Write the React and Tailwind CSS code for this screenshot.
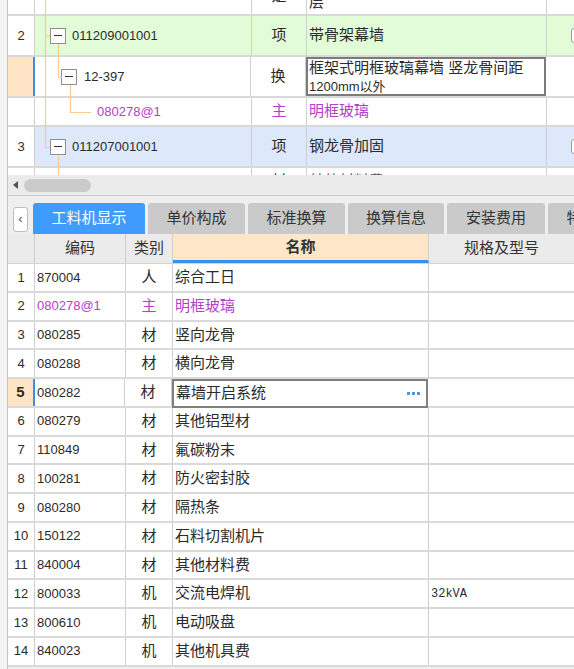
import React from "react";

const font = "font-['Liberation_Sans','Noto_Sans_CJK_SC',sans-serif]";
const purple = "text-[#b241cc]";

function Box() {
  return (
    <div className="w-[16px] h-[16px] border border-[#8f8f8f] bg-white flex items-center justify-center shrink-0">
      <div className="w-[8px] h-[1px] bg-[#333]" />
    </div>
  );
}

function Check() {
  return <div className="ml-[24px] w-[14px] h-[15px] shrink-0 rounded-[3px] border border-[#9a9a9a] bg-white" />;
}

const rows = [
  ["870004", "人", "综合工日"],
  ["080278@1", "主", "明框玻璃", true],
  ["080285", "材", "竖向龙骨"],
  ["080288", "材", "横向龙骨"],
  ["080282", "材", "幕墙开启系统"],
  ["080279", "材", "其他铝型材"],
  ["110849", "材", "氟碳粉末"],
  ["100281", "材", "防火密封胶"],
  ["080280", "材", "隔热条"],
  ["150122", "材", "石料切割机片"],
  ["840004", "材", "其他材料费"],
  ["800033", "机", "交流电焊机", false, "32kVA"],
  ["800610", "机", "电动吸盘"],
  ["840023", "机", "其他机具费"],
];

const tabs = [
  ["工料机显示", "w-[112px]"],
  ["单价构成", "w-[97px]"],
  ["标准换算", "w-[97px]"],
  ["换算信息", "w-[96px]"],
  ["安装费用", "w-[98px]"],
  ["特殊项目", "w-[97px]"],
];

export default function App() {
  return (
    <div className={`w-[574px] h-[669px] overflow-hidden bg-[#efefef] flex ${font} text-[#2b2b2b]`}>
      {/* gutter */}
      <div className="w-[8px] shrink-0 bg-[#f3f3f3] border-r border-[#c6c6c6]" />

      <div className="flex-1 min-w-0 flex flex-col">
        {/* top tree table */}
        <div className="relative h-[175px] bg-white overflow-hidden shrink-0">
          {/* partial row */}
          <div className="flex h-[16px] border-b-2 border-[#d9d9d9] overflow-hidden">
            <div className="w-[27px] border-r border-[#cfcfcf]" />
            <div className="w-[217px] border-r border-[#cfcfcf]" />
            <div className="w-[55px] border-r border-[#cfcfcf] flex justify-center">
              <span className="text-[15px] leading-[15px] mt-[-12px]">是</span>
            </div>
            <div className="w-[240px] border-r border-[#cfcfcf] pl-[2px]">
              <span className="block text-[15px] leading-[15px] mt-[-6px]">层</span>
            </div>
            <div className="flex-1" />
          </div>

          {/* row 2 */}
          <div className="flex h-[41px] border-b-2 border-[#d9d9d9]">
            <div className="w-[27px] border-r border-[#cfcfcf] bg-white flex items-center justify-center text-[13px]">2</div>
            <div className="w-[217px] border-r border-[#cfcfcf] bg-[#e2fcd8] flex items-center pl-[15px] gap-[6px] text-[13px]">
              <Box />
              <span>011209001001</span>
            </div>
            <div className="w-[55px] border-r border-[#cfcfcf] bg-[#e2fcd8] flex items-center justify-center text-[15px]">项</div>
            <div className="w-[240px] border-r border-[#cfcfcf] bg-[#e2fcd8] flex items-center pl-[2px] text-[15px]">带骨架幕墙</div>
            <div className="flex-1 bg-[#e2fcd8] flex items-center overflow-hidden"><Check /></div>
          </div>

          {/* row 12-397 */}
          <div className="flex h-[41px] border-b-2 border-[#d9d9d9]">
            <div className="w-[27px] border-r-2 border-[#3a8ee8] bg-[#ffe5c6]" />
            <div className="w-[216px] border-r border-[#cfcfcf] flex items-center pl-[26px] gap-[7px] text-[13px]">
              <Box />
              <span>12-397</span>
            </div>
            <div className="w-[55px] flex items-center justify-center text-[15px] border-r border-[#cfcfcf]">换</div>
            <div className="w-[240px] border-2 border-[#7b7b7b] flex flex-col justify-center pl-[1px] leading-[19px]">
              <span className="text-[15px] whitespace-nowrap">框架式明框玻璃幕墙 竖龙骨间距</span>
              <span className="text-[13px]">1200mm以外</span>
            </div>
            <div className="flex-1" />
          </div>

          {/* row 080278@1 */}
          <div className="flex h-[29px] border-b-2 border-[#d9d9d9]">
            <div className="w-[27px] border-r border-[#cfcfcf]" />
            <div className={`w-[217px] border-r border-[#cfcfcf] flex items-center pl-[62px] text-[13px] ${purple}`}>080278@1</div>
            <div className={`w-[55px] border-r border-[#cfcfcf] flex items-center justify-center text-[15px] ${purple}`}>主</div>
            <div className={`w-[240px] border-r border-[#cfcfcf] flex items-center pl-[2px] text-[15px] ${purple}`}>明框玻璃</div>
            <div className="flex-1" />
          </div>

          {/* row 3 */}
          <div className="flex h-[41px] border-b-2 border-[#d9d9d9]">
            <div className="w-[27px] border-r border-[#cfcfcf] bg-white flex items-center justify-center text-[13px]">3</div>
            <div className="w-[217px] border-r border-[#cfcfcf] bg-[#dde9fb] flex items-center pl-[15px] gap-[6px] text-[13px]">
              <Box />
              <span>011207001001</span>
            </div>
            <div className="w-[55px] border-r border-[#cfcfcf] bg-[#dde9fb] flex items-center justify-center text-[15px]">项</div>
            <div className="w-[240px] border-r border-[#cfcfcf] bg-[#dde9fb] flex items-center pl-[2px] text-[15px]">钢龙骨加固</div>
            <div className="flex-1 bg-[#dde9fb] flex items-center overflow-hidden"><Check /></div>
          </div>

          {/* partial bottom row */}
          <div className="flex h-[7px] overflow-hidden">
            <div className="w-[27px] border-r border-[#cfcfcf]" />
            <div className="w-[217px] border-r border-[#cfcfcf]" />
            <div className="w-[55px] border-r border-[#cfcfcf] flex justify-center">
              <span className="text-[15px] leading-[15px] mt-[5px]">材</span>
            </div>
            <div className="w-[240px] border-r border-[#cfcfcf] pl-[2px]">
              <span className="block text-[15px] leading-[15px] mt-[5px] text-[#555]">  其他材料费</span>
            </div>
            <div className="flex-1" />
          </div>

          {/* tree connectors */}
          <svg className="absolute inset-0 pointer-events-none" width="566" height="175">
            <g stroke="#ffc98c" strokeWidth="1.2" fill="none">
              <path d="M37.5 0 V147.5 H42" />
              <path d="M37.5 36 H42" />
              <path d="M50.5 44 V77.5 H54" />
              <path d="M62.5 85 V112.5 H83" />
              <path d="M50.5 156 V175" />
            </g>
          </svg>
        </div>

        {/* horizontal scrollbar */}
        <div className="h-[21px] shrink-0 bg-[#ebebeb] border-b border-[#c9c9c9] flex items-center pl-[5px] gap-[6px]">
          <svg width="5" height="8" viewBox="0 0 5 8">
            <path d="M5 0 L0 4 L5 8 Z" fill="#555" />
          </svg>
          <div className="w-[67px] h-[13px] rounded-full bg-[#cbcbcb]" />
        </div>

        {/* tabs */}
        <div className="h-[38px] shrink-0 bg-[#efefef] flex items-end pl-[5px] gap-[3px] overflow-hidden">
          <div className="self-center mt-[8px] mr-[2px] w-[15px] h-[25px] shrink-0 bg-white border border-[#bdbdbd] rounded-[3px] flex items-center justify-center text-[13px] text-[#555]">
            ‹
          </div>
          {tabs.map(([t, w], i) => (
            <div
              key={t}
              className={`${w} h-[31px] shrink-0 rounded-t-[3px] flex items-center justify-center text-[15px] ${
                i === 0 ? "bg-[#3f9bfd] text-white" : "bg-[#cacaca] text-[#333]"
              }`}
            >
              {t}
            </div>
          ))}
        </div>

        {/* header */}
        <div className="h-[30px] shrink-0 flex bg-[#ebebeb] border-b border-[#d4d4d4] text-[15px] text-[#333]">
          <div className="w-[27px] border-r border-[#cfcfcf]" />
          <div className="w-[91px] border-r border-[#cfcfcf] flex items-center justify-center">编码</div>
          <div className="w-[47px] border-r border-[#cfcfcf] flex items-center justify-center">类别</div>
          <div className="w-[256px] border-r border-[#cfcfcf] bg-[#ffe6c8] border-b-[3px] border-b-[#3a8ef0] flex items-center justify-center font-bold">名称</div>
          <div className="flex-1 flex items-center justify-center">规格及型号</div>
        </div>

        {/* data rows */}
        <div className="bg-white shrink-0">
          {rows.map(([code, type, name, main, spec], i) => {
            const sel = i === 4;
            const c = main ? purple : "";
            return (
              <div key={i} className="h-[28.75px] flex border-b-2 border-[#dadada]">
                <div
                  className={`w-[27px] border-r flex items-center justify-center text-[13px] ${
                    sel ? "bg-[#ffe5c6] font-bold border-r-2 border-[#3a8ee8] text-[15px]" : "border-[#cfcfcf]"
                  }`}
                >
                  {i + 1}
                </div>
                <div className={`${sel ? "w-[90px]" : "w-[91px]"} border-r border-[#cfcfcf] flex items-center pl-[2px] text-[13px] ${c}`}>
                  {code}
                </div>
                <div className={`w-[47px] border-r border-[#cfcfcf] flex items-center justify-center text-[15px] ${c}`}>{type}</div>
                <div
                  className={`w-[256px] flex items-center pl-[2px] text-[15px] ${c} ${
                    sel ? "border-2 border-[#7f7f7f] justify-between pr-[6px] mb-[-2px]" : "border-r border-[#cfcfcf]"
                  }`}
                >
                  <span>{name}</span>
                  {sel && (
                    <span className="flex gap-[2px]">
                      <i className="w-[3px] h-[3px] bg-[#4f95dc]" />
                      <i className="w-[3px] h-[3px] bg-[#4f95dc]" />
                      <i className="w-[3px] h-[3px] bg-[#4f95dc]" />
                    </span>
                  )}
                </div>
                <div className="flex-1 flex items-center pl-[2px] font-['Liberation_Mono',monospace] text-[12px]">{spec}</div>
              </div>
            );
          })}
        </div>
      </div>
    </div>
  );
}
